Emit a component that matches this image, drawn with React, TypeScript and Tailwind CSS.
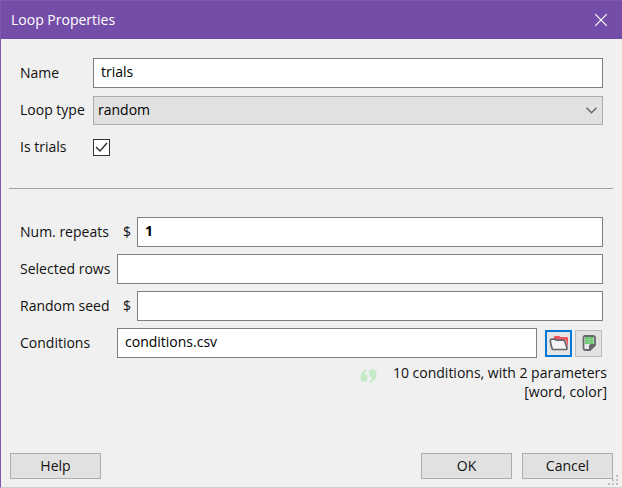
import type { InputHTMLAttributes, ReactNode } from "react";

const fieldClass =
  "h-[30px] w-full min-w-0 flex-1 border border-[#7f7f7f] bg-white px-[7px] pb-[3px] text-sm text-black outline-none";

function Row({ id, label, wide, children }: { id: string; label: string; wide?: boolean; children: ReactNode }) {
  return (
    <div className="flex h-[30px] items-center">
      <label htmlFor={id} className={`shrink-0 whitespace-nowrap ${wide ? "w-[97px]" : "w-[73px]"}`}>
        {label}
      </label>
      {children}
    </div>
  );
}

function Field({ className = "", ...props }: InputHTMLAttributes<HTMLInputElement>) {
  return <input type="text" className={`${fieldClass} ${className}`} {...props} />;
}

function Dollar() {
  return <span className="w-5 shrink-0 pl-[6px]">$</span>;
}

function FolderIcon() {
  return (
    <svg width="20" height="18" viewBox="0 0 20 18" fill="none" aria-hidden="true">
      <path d="M5 5.500V3q0-1 1-1h4l1.500 1H18q1 0 1 1v10l-2-7.500z" fill="#f2545b" />
      <path
        d="M4.500 15.500q-1.300 0-1.600-1.200L1.300 7.500Q1 5.200 3 5.200h3l1.500 1H14q1.500 0 2 1.500l2 6.300q.2 1.500-1.300 1.500z"
        fill="#f4f4f4"
        stroke="#66666e"
        strokeWidth="1.700"
        strokeLinejoin="round"
      />
    </svg>
  );
}

function SheetIcon() {
  return (
    <svg width="16" height="18" viewBox="0 0 16 18" fill="none" aria-hidden="true">
      <path
        d="M4 2h8q2 0 2 2v7l-5 5H4.500q-2 0-2-2V4q0-2 1.500-2z"
        fill="#e9e9e9"
        stroke="#66666e"
        strokeWidth="1.800"
        strokeLinejoin="round"
      />
      <path d="M4 3h8.500v7H4z" fill="#6cc674" />
      <path d="M4 5.500h8.500M4 8h8.500M8 3v7" stroke="#9bdba0" strokeWidth=".6" />
      <path d="M8 16v-4q0-2 2-2h4.500v1l-5 5z" fill="#66666e" />
    </svg>
  );
}

function QuoteIcon() {
  return (
    <svg width="17" height="16" viewBox="0 0 17 16" fill="#c3ebc8" aria-hidden="true">
      <path d="M7 1v1.500Q5 4 5 6q2.500.5 2.500 3.500 0 4-4 4.500-3 0-3-4.500Q.5 3 7 1z" />
      <path d="M12.500 1q4 .5 4 5 0 7-7 9l-.3-1.500q2.500-1.500 2.600-4Q9 9 9 5q0-3.500 3.500-4z" />
    </svg>
  );
}

function DialogButton({ children }: { children: ReactNode }) {
  return (
    <button type="button" className="h-[26px] w-[91px] border border-[#adadad] bg-[#e1e1e1] text-sm leading-5">
      {children}
    </button>
  );
}

export default function App() {
  return (
    <div className="flex min-h-screen flex-col border-b border-l border-b-[#cfcfcf] border-l-[#8058b0] bg-[#f0f0f0] font-['Open_Sans','Noto_Sans',sans-serif] text-sm text-[#111]">
      <header className="flex h-[39px] items-center justify-between border-t border-t-[#8058b0] bg-[#744da9] pr-[15px] pl-[10px] text-white">
        <h1 className="text-sm">Loop Properties</h1>
        <button type="button" aria-label="Close">
          <svg width="12" height="12" viewBox="0 0 12 12" stroke="white" strokeWidth="1.200" aria-hidden="true">
            <path d="m0 0 12 12M12 0 0 12" />
          </svg>
        </button>
      </header>

      <form className="flex flex-1 flex-col">
        <section className="flex flex-col gap-[7px] pt-[19px] pr-[19px] pl-[19px]">
          <Row id="name" label="Name">
            <Field id="name" defaultValue="trials" />
          </Row>
          <Row id="type" label="Loop type">
            <div className="grid min-w-0 flex-1 items-center">
              <select
                id="type"
                className="col-start-1 row-start-1 h-[29px] w-full appearance-none border border-[#adadad] bg-[#e1e1e1] px-1 text-sm text-black"
              >
                <option>random</option>
              </select>
              <svg
                className="pointer-events-none col-start-1 row-start-1 mr-[6px] justify-self-end"
                width="11"
                height="7"
                viewBox="0 0 11 7"
                fill="none"
                stroke="#666"
                strokeWidth="1.400"
                aria-hidden="true"
              >
                <path d="m.5.7 5 5 5-5" />
              </svg>
            </div>
          </Row>
          <Row id="trials" label="Is trials">
            <span className="grid">
              <input
                id="trials"
                type="checkbox"
                defaultChecked
                className="peer col-start-1 row-start-1 size-[17px] appearance-none border border-[#333] bg-white"
              />
              <svg
                className="pointer-events-none invisible col-start-1 row-start-1 peer-checked:visible"
                width="17"
                height="17"
                viewBox="0 0 17 17"
                fill="none"
                stroke="#333"
                strokeWidth="1.500"
                aria-hidden="true"
              >
                <path d="m3 8 4 4 7-8" />
              </svg>
            </span>
          </Row>
        </section>

        <hr className="mt-[26px] mr-[9px] ml-2 border-[#a0a0a0]" />

        <section className="flex flex-col gap-[7px] pt-7 pr-[19px] pl-[19px]">
          <Row id="repeats" label="Num. repeats" wide>
            <Dollar />
            <Field id="repeats" defaultValue="1" className="font-bold" />
          </Row>
          <Row id="rows" label="Selected rows" wide>
            <Field id="rows" />
          </Row>
          <Row id="seed" label="Random seed" wide>
            <Dollar />
            <Field id="seed" />
          </Row>
          <Row id="conditions" label="Conditions" wide>
            <Field id="conditions" defaultValue="conditions.csv" />
            <div className="flex shrink-0 gap-[3px] pr-px pl-2">
              <button
                type="button"
                aria-label="Open conditions file"
                className="grid size-[27px] place-items-center border-2 border-[#0078d7] bg-[#e5e5e5]"
              >
                <FolderIcon />
              </button>
              <button
                type="button"
                aria-label="Preview conditions"
                className="grid size-[27px] place-items-center border border-[#bcbcbc] bg-[#e1e1e1]"
              >
                <SheetIcon />
              </button>
            </div>
          </Row>
        </section>

        <div className="flex justify-end gap-4 pt-[5px] pr-[15px]">
          <span className="pt-[5px]">
            <QuoteIcon />
          </span>
          <p className="text-right leading-[19px]">
            10 conditions, with 2 parameters
            <br />
            [word, color]
          </p>
        </div>

        <footer className="mt-auto flex gap-[10px] pr-[9px] pb-2 pl-[9px]">
          <DialogButton>Help</DialogButton>
          <span className="flex-1" />
          <DialogButton>OK</DialogButton>
          <DialogButton>Cancel</DialogButton>
        </footer>
      </form>

      <svg className="absolute right-[3px] bottom-[2px]" width="11" height="11" viewBox="0 0 11 11" fill="#bfbfbf" aria-hidden="true">
        <path d="M8 0h2v2H8zM4 4h2v2H4zM8 4h2v2H8zM0 8h2v2H0zM4 8h2v2H4zM8 8h2v2H8z" />
      </svg>
    </div>
  );
}
